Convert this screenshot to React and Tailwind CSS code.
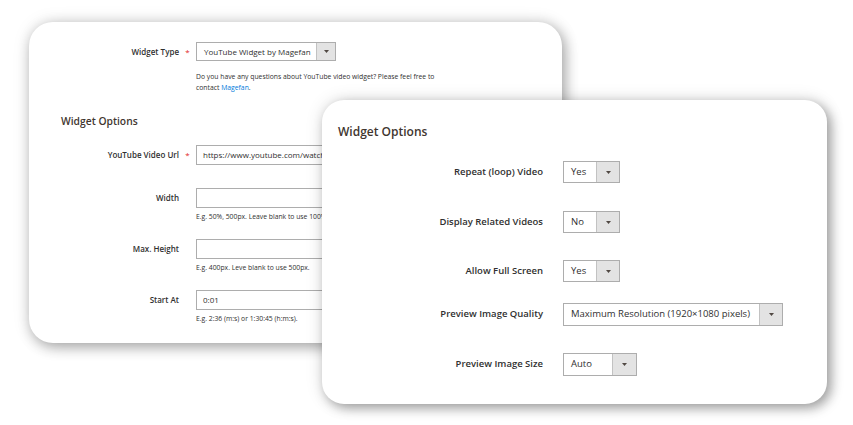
import React from "react";

const Arrow = () => (
  <svg width="5" height="3" viewBox="0 0 5 3"><path d="M0 0h5L2.5 3z" fill="#514943" /></svg>
);

function Select({ value, w, arrowW, h, text }) {
  return (
    <div className={`flex border border-[#adadad] bg-white ${w} ${h}`}>
      <div className={`flex-1 flex items-center pl-[7px] ${text} text-[#303030] whitespace-nowrap`}>{value}</div>
      <div className={`${arrowW} flex items-center justify-center bg-[#e3e3e3] border-l border-[#c2c2c2]`}>
        <Arrow />
      </div>
    </div>
  );
}

function BackRow({ label, req, children, help, mt, helpMt = "mt-[3px]" }) {
  return (
    <div className={`flex flex-col ${mt}`}>
      <div className="flex items-center">
        <div className="w-[150px] text-right text-[8px] font-semibold text-[#303030]">{label}</div>
        <div className="w-[17px] flex justify-center text-[8px] text-[#e22626]">{req ? "*" : ""}</div>
        {children}
      </div>
      {help && <div className={`ml-[167px] ${helpMt} text-[6.8px] leading-[11px] text-[#303030]`}>{help}</div>}
    </div>
  );
}

const Input = ({ value }) => (
  <div className="w-[320px] h-[20px] border border-[#adadad] bg-white flex items-center pl-[6px] text-[8px] text-[#303030] whitespace-nowrap overflow-hidden">{value}</div>
);

function FrontRow({ label, children, mt }) {
  return (
    <div className={`flex items-center ${mt}`}>
      <div className="w-[221px] text-right text-[9.5px] font-semibold text-[#303030] whitespace-nowrap">{label}</div>
      <div className="ml-[20px]">{children}</div>
    </div>
  );
}

export default function App() {
  return (
    <div className="relative w-[853px] h-[425px] bg-white overflow-hidden" style={{ fontFamily: '"Open Sans", "Noto Sans", sans-serif' }}>
      <div className="absolute left-[29px] top-[22px] w-[533px] h-[321px] bg-white rounded-[24px] shadow-[3px_4px_14px_rgba(0,0,0,0.32),0_0_18px_rgba(0,0,0,0.1)] pt-[20px]">
        <BackRow label="Widget Type" req helpMt="mt-[10px]" help={<>Do you have any questions about YouTube video widget? Please feel free to<br />contact <span className="text-[#007bdb]">Magefan</span>.</>}>
          <Select value="YouTube Widget by Magefan" w="w-[140px]" arrowW="w-[19px]" h="h-[19px]" text="text-[8px]" />
        </BackRow>
        <div className="ml-[32px] mt-[21px] text-[10.3px] font-semibold text-[#41362f] leading-[14px]">Widget Options</div>
        <BackRow label="YouTube Video Url" req mt="mt-[17px]">
          <Input value="https://www.youtube.com/watch?v=" />
        </BackRow>
        <BackRow label="Width" mt="mt-[23px]" help="E.g. 50%, 500px. Leave blank to use 100%.">
          <Input value="" />
        </BackRow>
        <BackRow label="Max. Height" mt="mt-[17px]" help="E.g. 400px. Leve blank to use 500px.">
          <Input value="" />
        </BackRow>
        <BackRow label="Start At" mt="mt-[17px]" help="E.g. 2:36 (m:s) or 1:30:45 (h:m:s).">
          <Input value="0:01" />
        </BackRow>
      </div>

      <div className="absolute left-[322px] top-[100px] w-[505px] h-[304px] bg-white rounded-[22px] shadow-[4px_4px_12px_rgba(0,0,0,0.35),0_0_18px_rgba(0,0,0,0.12)] pt-[24px]">
        <div className="ml-[16px] text-[12px] font-semibold text-[#41362f] leading-[16px]">Widget Options</div>
        <FrontRow label="Repeat (loop) Video" mt="mt-[21px]">
          <Select value="Yes" w="w-[57px]" arrowW="w-[23px]" h="h-[22px]" text="text-[9.5px]" />
        </FrontRow>
        <FrontRow label="Display Related Videos" mt="mt-[28px]">
          <Select value="No" w="w-[57px]" arrowW="w-[23px]" h="h-[22px]" text="text-[9.5px]" />
        </FrontRow>
        <FrontRow label="Allow Full Screen" mt="mt-[27px]">
          <Select value="Yes" w="w-[57px]" arrowW="w-[23px]" h="h-[22px]" text="text-[9.5px]" />
        </FrontRow>
        <FrontRow label="Preview Image Quality" mt="mt-[21px]">
          <Select value="Maximum Resolution (1920×1080 pixels)" w="w-[220px]" arrowW="w-[23px]" h="h-[23px]" text="text-[9.5px]" />
        </FrontRow>
        <FrontRow label="Preview Image Size" mt="mt-[27px]">
          <Select value="Auto" w="w-[74px]" arrowW="w-[24px]" h="h-[23px]" text="text-[9.5px]" />
        </FrontRow>
      </div>
    </div>
  );
}
